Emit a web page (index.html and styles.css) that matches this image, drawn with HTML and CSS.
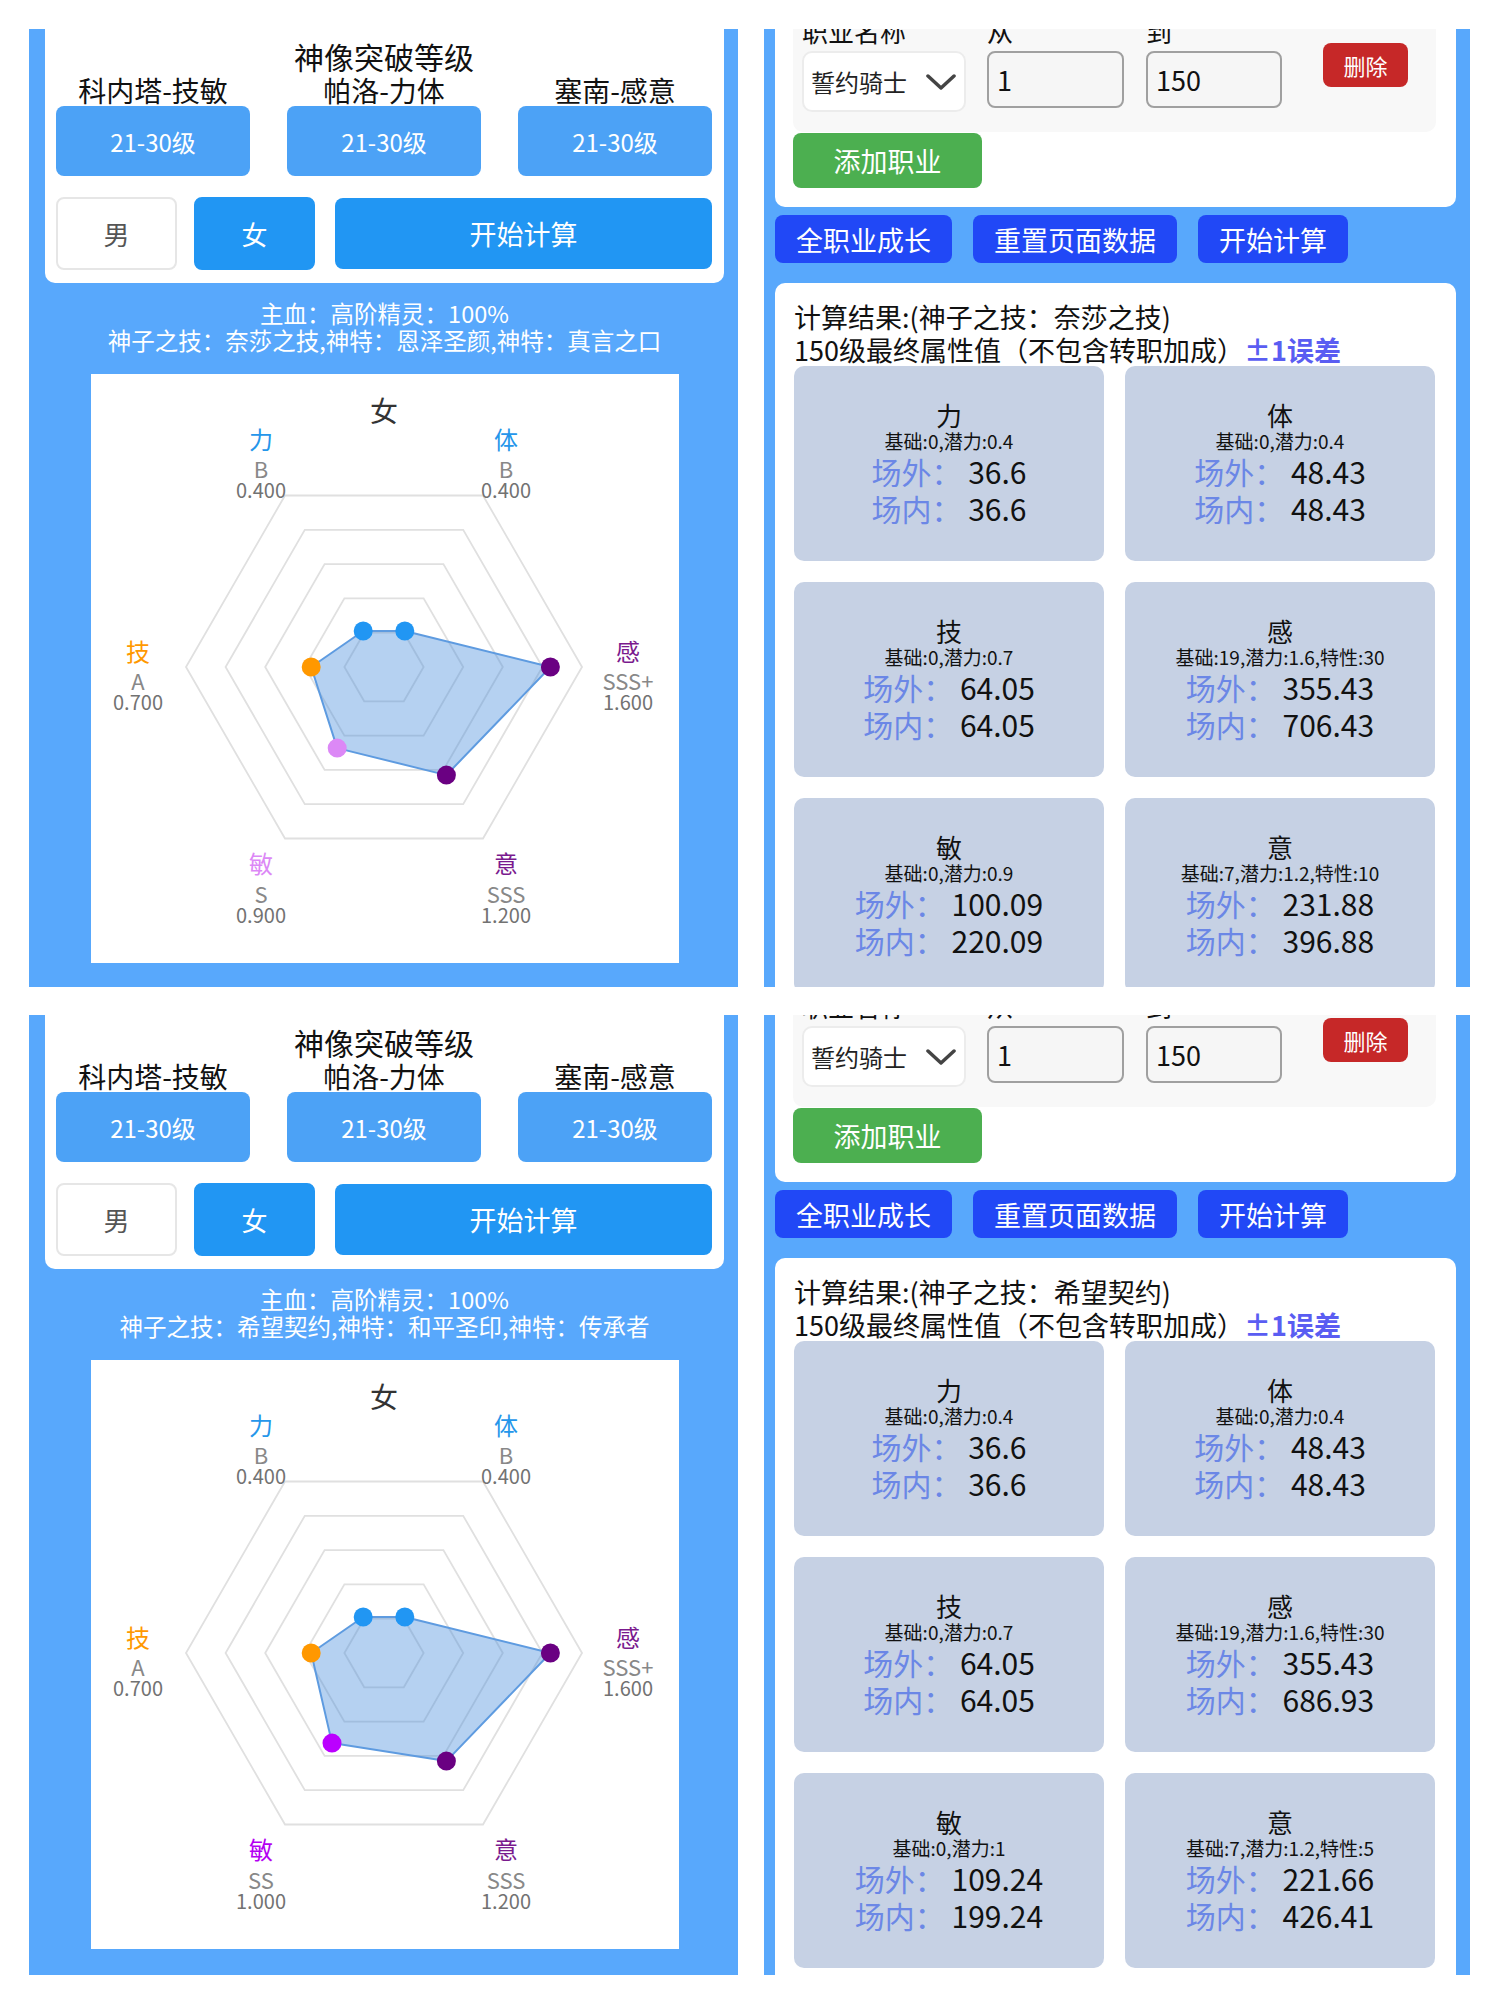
FILE: index.html
```html
<!DOCTYPE html>
<html lang="zh-CN">
<head>
<meta charset="utf-8">
<title>神像突破计算</title>
<link rel="stylesheet" href="styles.css">
</head>
<body>
<div class="page">

  <!-- top left -->
  <section class="panel panel-left">
    <div class="setup-card">
      <div class="setup-title">神像突破等级</div>
      <div class="level-row">
        <div class="level-col"><div class="level-name">科内塔-技敏</div><button class="level-btn">21-30级</button></div>
        <div class="level-col"><div class="level-name">帕洛-力体</div><button class="level-btn">21-30级</button></div>
        <div class="level-col"><div class="level-name">塞南-感意</div><button class="level-btn">21-30级</button></div>
      </div>
      <div class="gender-row">
        <button class="gender-btn">男</button>
        <button class="gender-btn is-active">女</button>
        <button class="calc-btn">开始计算</button>
      </div>
    </div>
    <div class="info">
      <div>主血：高阶精灵：100%</div>
      <div>神子之技：奈莎之技,神特：恩泽圣颜,神特：真言之口</div>
    </div>
    <div class="chart-box">
      <svg class="radar" viewBox="0 0 588 589" width="588" height="589">
        <g transform="translate(-3,0)">
          <g class="rings">
            <polygon points="494,293 395,121.5 197,121.5 98,293 197,464.5 395,464.5"/>
            <polygon points="454.4,293 375.2,155.8 216.8,155.8 137.6,293 216.8,430.2 375.2,430.2"/>
            <polygon points="414.8,293 355.4,190.1 236.6,190.1 177.2,293 236.6,395.9 355.4,395.9"/>
            <polygon points="375.2,293 335.6,224.4 256.4,224.4 216.8,293 256.4,361.6 335.6,361.6"/>
            <polygon points="335.6,293 315.8,258.7 276.2,258.7 256.4,293 276.2,327.3 315.8,327.3"/>
          </g>
          <polygon class="area" points="275.2,257 316.8,257 462.4,293 358.4,401.1 249.2,374.1 223.2,293"/>
          <circle class="dot c-blue" cx="275.2" cy="257" r="9.5"/>
          <circle class="dot c-blue" cx="316.8" cy="257" r="9.5"/>
          <circle class="dot c-purple" cx="462.4" cy="293" r="9.5"/>
          <circle class="dot c-purple" cx="358.4" cy="401.1" r="9.5"/>
          <circle class="dot c-violet" cx="249.2" cy="374.1" r="9.5"/>
          <circle class="dot c-orange" cx="223.2" cy="293" r="9.5"/>
        </g>
        <g transform="translate(-1,2.5)">
          <text class="r-title" x="294" y="45">女</text>

          <text class="r-name t-blue" x="171" y="72">力</text>
          <text class="r-grade" x="171" y="101.5">B</text>
          <text class="r-val" x="171" y="121.5">0.400</text>

          <text class="r-name t-blue" x="416" y="72">体</text>
          <text class="r-grade" x="416" y="101.5">B</text>
          <text class="r-val" x="416" y="121.5">0.400</text>

          <text class="r-name t-orange" x="48" y="284.5">技</text>
          <text class="r-grade" x="48" y="313">A</text>
          <text class="r-val" x="48" y="333.5">0.700</text>

          <text class="r-name t-purple" x="538" y="284.5">感</text>
          <text class="r-grade" x="538" y="313">SSS+</text>
          <text class="r-val" x="538" y="333.5">1.600</text>

          <text class="r-name t-violet" x="171" y="496.5">敏</text>
          <text class="r-grade" x="171" y="526">S</text>
          <text class="r-val" x="171" y="546">0.900</text>

          <text class="r-name t-purple" x="416" y="496.5">意</text>
          <text class="r-grade" x="416" y="526">SSS</text>
          <text class="r-val" x="416" y="546">1.200</text>
        </g>
      </svg>
    </div>
  </section>

  <!-- top right -->
  <section class="panel panel-right">
    <div class="job-card">
      <div class="job-box">
        <div class="job-row">
          <div class="field field-select">
            <div class="field-label">职业名称</div>
            <div class="select">
              <span>誓约骑士</span>
              <svg class="chevron" viewBox="0 0 30 16" width="30" height="16"><polyline points="2,2 15,14 28,2"/></svg>
            </div>
          </div>
          <div class="field field-from">
            <div class="field-label">从</div>
            <div class="num-input">1</div>
          </div>
          <div class="field field-to">
            <div class="field-label">到</div>
            <div class="num-input">150</div>
          </div>
          <button class="del-btn">删除</button>
        </div>
      </div>
      <button class="add-btn">添加职业</button>
    </div>
    <div class="action-row">
      <button class="action-btn">全职业成长</button>
      <button class="action-btn">重置页面数据</button>
      <button class="action-btn">开始计算</button>
    </div>
    <div class="result-card">
      <div class="result-head">计算结果:(神子之技：奈莎之技)</div>
      <div class="result-head">150级最终属性值（不包含转职加成）<span class="err">±1误差</span></div>
      <div class="stats">
        <div class="stat">
          <div class="stat-name">力</div>
          <div class="stat-base">基础:0,潜力:0.4</div>
          <div class="stat-line"><span class="stat-key">场外：</span> 36.6</div>
          <div class="stat-line"><span class="stat-key">场内：</span> 36.6</div>
        </div>
        <div class="stat">
          <div class="stat-name">体</div>
          <div class="stat-base">基础:0,潜力:0.4</div>
          <div class="stat-line"><span class="stat-key">场外：</span> 48.43</div>
          <div class="stat-line"><span class="stat-key">场内：</span> 48.43</div>
        </div>
        <div class="stat">
          <div class="stat-name">技</div>
          <div class="stat-base">基础:0,潜力:0.7</div>
          <div class="stat-line"><span class="stat-key">场外：</span> 64.05</div>
          <div class="stat-line"><span class="stat-key">场内：</span> 64.05</div>
        </div>
        <div class="stat">
          <div class="stat-name">感</div>
          <div class="stat-base">基础:19,潜力:1.6,特性:30</div>
          <div class="stat-line"><span class="stat-key">场外：</span> 355.43</div>
          <div class="stat-line"><span class="stat-key">场内：</span> 706.43</div>
        </div>
        <div class="stat">
          <div class="stat-name">敏</div>
          <div class="stat-base">基础:0,潜力:0.9</div>
          <div class="stat-line"><span class="stat-key">场外：</span> 100.09</div>
          <div class="stat-line"><span class="stat-key">场内：</span> 220.09</div>
        </div>
        <div class="stat">
          <div class="stat-name">意</div>
          <div class="stat-base">基础:7,潜力:1.2,特性:10</div>
          <div class="stat-line"><span class="stat-key">场外：</span> 231.88</div>
          <div class="stat-line"><span class="stat-key">场内：</span> 396.88</div>
        </div>
      </div>
    </div>
  </section>

  <!-- bottom left -->
  <section class="panel panel-left">
    <div class="setup-card">
      <div class="setup-title">神像突破等级</div>
      <div class="level-row">
        <div class="level-col"><div class="level-name">科内塔-技敏</div><button class="level-btn">21-30级</button></div>
        <div class="level-col"><div class="level-name">帕洛-力体</div><button class="level-btn">21-30级</button></div>
        <div class="level-col"><div class="level-name">塞南-感意</div><button class="level-btn">21-30级</button></div>
      </div>
      <div class="gender-row">
        <button class="gender-btn">男</button>
        <button class="gender-btn is-active">女</button>
        <button class="calc-btn">开始计算</button>
      </div>
    </div>
    <div class="info">
      <div>主血：高阶精灵：100%</div>
      <div>神子之技：希望契约,神特：和平圣印,神特：传承者</div>
    </div>
    <div class="chart-box">
      <svg class="radar" viewBox="0 0 588 589" width="588" height="589">
        <g transform="translate(-3,0)">
          <g class="rings">
            <polygon points="494,293 395,121.5 197,121.5 98,293 197,464.5 395,464.5"/>
            <polygon points="454.4,293 375.2,155.8 216.8,155.8 137.6,293 216.8,430.2 375.2,430.2"/>
            <polygon points="414.8,293 355.4,190.1 236.6,190.1 177.2,293 236.6,395.9 355.4,395.9"/>
            <polygon points="375.2,293 335.6,224.4 256.4,224.4 216.8,293 256.4,361.6 335.6,361.6"/>
            <polygon points="335.6,293 315.8,258.7 276.2,258.7 256.4,293 276.2,327.3 315.8,327.3"/>
          </g>
          <polygon class="area" points="275.2,257 316.8,257 462.4,293 358.4,401.1 244,383.1 223.2,293"/>
          <circle class="dot c-blue" cx="275.2" cy="257" r="9.5"/>
          <circle class="dot c-blue" cx="316.8" cy="257" r="9.5"/>
          <circle class="dot c-purple" cx="462.4" cy="293" r="9.5"/>
          <circle class="dot c-purple" cx="358.4" cy="401.1" r="9.5"/>
          <circle class="dot c-magenta" cx="244" cy="383.1" r="9.5"/>
          <circle class="dot c-orange" cx="223.2" cy="293" r="9.5"/>
        </g>
        <g transform="translate(-1,2.5)">
          <text class="r-title" x="294" y="45">女</text>

          <text class="r-name t-blue" x="171" y="72">力</text>
          <text class="r-grade" x="171" y="101.5">B</text>
          <text class="r-val" x="171" y="121.5">0.400</text>

          <text class="r-name t-blue" x="416" y="72">体</text>
          <text class="r-grade" x="416" y="101.5">B</text>
          <text class="r-val" x="416" y="121.5">0.400</text>

          <text class="r-name t-orange" x="48" y="284.5">技</text>
          <text class="r-grade" x="48" y="313">A</text>
          <text class="r-val" x="48" y="333.5">0.700</text>

          <text class="r-name t-purple" x="538" y="284.5">感</text>
          <text class="r-grade" x="538" y="313">SSS+</text>
          <text class="r-val" x="538" y="333.5">1.600</text>

          <text class="r-name t-magenta" x="171" y="496.5">敏</text>
          <text class="r-grade" x="171" y="526">SS</text>
          <text class="r-val" x="171" y="546">1.000</text>

          <text class="r-name t-purple" x="416" y="496.5">意</text>
          <text class="r-grade" x="416" y="526">SSS</text>
          <text class="r-val" x="416" y="546">1.200</text>
        </g>
      </svg>
    </div>
  </section>

  <!-- bottom right -->
  <section class="panel panel-right panel-right-low">
    <div class="job-card">
      <div class="job-box">
        <div class="job-row">
          <div class="field field-select">
            <div class="field-label">职业名称</div>
            <div class="select">
              <span>誓约骑士</span>
              <svg class="chevron" viewBox="0 0 30 16" width="30" height="16"><polyline points="2,2 15,14 28,2"/></svg>
            </div>
          </div>
          <div class="field field-from">
            <div class="field-label">从</div>
            <div class="num-input">1</div>
          </div>
          <div class="field field-to">
            <div class="field-label">到</div>
            <div class="num-input">150</div>
          </div>
          <button class="del-btn">删除</button>
        </div>
      </div>
      <button class="add-btn">添加职业</button>
    </div>
    <div class="action-row">
      <button class="action-btn">全职业成长</button>
      <button class="action-btn">重置页面数据</button>
      <button class="action-btn">开始计算</button>
    </div>
    <div class="result-card">
      <div class="result-head">计算结果:(神子之技：希望契约)</div>
      <div class="result-head">150级最终属性值（不包含转职加成）<span class="err">±1误差</span></div>
      <div class="stats">
        <div class="stat">
          <div class="stat-name">力</div>
          <div class="stat-base">基础:0,潜力:0.4</div>
          <div class="stat-line"><span class="stat-key">场外：</span> 36.6</div>
          <div class="stat-line"><span class="stat-key">场内：</span> 36.6</div>
        </div>
        <div class="stat">
          <div class="stat-name">体</div>
          <div class="stat-base">基础:0,潜力:0.4</div>
          <div class="stat-line"><span class="stat-key">场外：</span> 48.43</div>
          <div class="stat-line"><span class="stat-key">场内：</span> 48.43</div>
        </div>
        <div class="stat">
          <div class="stat-name">技</div>
          <div class="stat-base">基础:0,潜力:0.7</div>
          <div class="stat-line"><span class="stat-key">场外：</span> 64.05</div>
          <div class="stat-line"><span class="stat-key">场内：</span> 64.05</div>
        </div>
        <div class="stat">
          <div class="stat-name">感</div>
          <div class="stat-base">基础:19,潜力:1.6,特性:30</div>
          <div class="stat-line"><span class="stat-key">场外：</span> 355.43</div>
          <div class="stat-line"><span class="stat-key">场内：</span> 686.93</div>
        </div>
        <div class="stat">
          <div class="stat-name">敏</div>
          <div class="stat-base">基础:0,潜力:1</div>
          <div class="stat-line"><span class="stat-key">场外：</span> 109.24</div>
          <div class="stat-line"><span class="stat-key">场内：</span> 199.24</div>
        </div>
        <div class="stat">
          <div class="stat-name">意</div>
          <div class="stat-base">基础:7,潜力:1.2,特性:5</div>
          <div class="stat-line"><span class="stat-key">场外：</span> 221.66</div>
          <div class="stat-line"><span class="stat-key">场内：</span> 426.41</div>
        </div>
      </div>
    </div>
  </section>

</div>
</body>
</html>
```

FILE: styles.css
```css
* { box-sizing: border-box; }

html, body {
  margin: 0;
  background: #ffffff;
}

body {
  font-family: "Noto Sans CJK SC", "Noto Sans", sans-serif;
  color: #111111;
}

button {
  font-family: inherit;
  border: none;
  margin: 0;
  padding: 0;
  cursor: pointer;
}

.page {
  display: grid;
  grid-template-columns: 709px 706px;
  grid-template-rows: 958px 960px;
  column-gap: 26px;
  row-gap: 28px;
  padding: 29px 0 0 29px;
}

.panel {
  background: #58a8fc;
  overflow: hidden;
}

/* ---------- left panel ---------- */
.panel-left {
  padding: 0 14px 0 16px;
}

.setup-card {
  background: #ffffff;
  border-radius: 0 0 10px 10px;
  padding: 9px 12px 13px 11px;
}

.setup-title {
  font-size: 30px;
  line-height: 36px;
  text-align: center;
  color: #111;
}

.level-row {
  display: grid;
  grid-template-columns: repeat(3, 1fr);
  column-gap: 37px;
}

.level-name {
  font-size: 28px;
  line-height: 32px;
  text-align: center;
  color: #111;
}

.level-btn {
  display: block;
  width: 100%;
  height: 70px;
  background: #4ca2f6;
  color: #ffffff;
  font-size: 24px;
  border-radius: 8px;
}

.gender-row {
  display: flex;
  align-items: center;
  margin-top: 21px;
  height: 73px;
}

.gender-btn {
  width: 121px;
  height: 73px;
  background: #ffffff;
  border: 2px solid #e6e6e6;
  border-radius: 8px;
  color: #555555;
  font-size: 26px;
  margin-right: 17px;
}

.gender-btn.is-active {
  background: #2196f3;
  border-color: #2196f3;
  color: #ffffff;
  margin-right: 20px;
}

.calc-btn {
  flex: 1;
  height: 71px;
  background: #2196f3;
  color: #ffffff;
  font-size: 27px;
  border-radius: 8px;
}

.info {
  margin-top: 17px;
  text-align: center;
  color: #ffffff;
  font-size: 23.5px;
  line-height: 27px;
}

.chart-box {
  width: 588px;
  height: 589px;
  margin: 20px auto 0;
  background: #ffffff;
}

.radar {
  display: block;
}

.rings polygon {
  fill: none;
  stroke: #e0e0e0;
  stroke-width: 1.8;
}

.area {
  fill: rgba(70, 140, 220, 0.4);
  stroke: #5e9be0;
  stroke-width: 2;
  stroke-linejoin: round;
}

.dot { stroke: none; }
.c-blue { fill: #2196f3; }
.c-purple { fill: #6a0082; }
.c-violet { fill: #dc88f6; }
.c-magenta { fill: #bb00ff; }
.c-orange { fill: #ff9800; }

.radar text {
  font-family: "Noto Sans CJK SC", "Noto Sans", sans-serif;
  text-anchor: middle;
}

.r-title { font-size: 28px; fill: #333333; }
.r-name { font-size: 24px; }
.r-grade { font-size: 22px; fill: #888888; }
.r-val { font-size: 20px; fill: #727272; }

.t-blue { fill: #2596ea; }
.t-orange { fill: #ff9800; }
.t-purple { fill: #7a1a8e; }
.t-violet { fill: #dc88f6; }
.t-magenta { fill: #b400f2; }

/* ---------- right panel ---------- */
.panel-right {
  padding: 0 14px 0 11px;
}

.job-card {
  background: #ffffff;
  border-radius: 0 0 10px 10px;
  margin-top: -30px;
  padding: 0 20px 19px 18px;
}

.panel-right-low .job-card {
  margin-top: -41px;
}

.job-box {
  background: #f8f8f8;
  border-radius: 10px;
  padding: 17px 9px 20px;
}

.job-row {
  display: flex;
  align-items: flex-start;
}

.field-label {
  font-size: 26px;
  line-height: 30px;
  margin-bottom: 5px;
  color: #111;
}

.field-select { width: 164px; margin-right: 21px; }
.field-from { width: 137px; margin-right: 22px; }
.field-to { width: 136px; margin-right: 41px; }

.select {
  height: 61px;
  background: #ffffff;
  border: 2px solid #ececec;
  border-radius: 10px;
  display: flex;
  align-items: center;
  justify-content: space-between;
  padding: 0 8px 0 7px;
  font-size: 24px;
  color: #222;
}

.chevron polyline {
  fill: none;
  stroke: #444444;
  stroke-width: 3.5;
  stroke-linecap: round;
  stroke-linejoin: round;
}

.num-input {
  height: 57px;
  background: #f6f6f6;
  border: 2px solid #a0a0a0;
  border-radius: 8px;
  padding-left: 8px;
  font-size: 27px;
  line-height: 53px;
  color: #111;
}

.del-btn {
  margin-top: 27px;
  width: 85px;
  height: 44px;
  background: #c62828;
  color: #ffffff;
  font-size: 22px;
  border-radius: 8px;
}

.add-btn {
  display: block;
  margin-top: 1px;
  width: 189px;
  height: 55px;
  background: #4caf50;
  color: #ffffff;
  font-size: 27px;
  border-radius: 8px;
}

.action-row {
  display: flex;
  gap: 21px;
  margin-top: 8px;
}

.action-btn {
  height: 48px;
  padding: 0 21px;
  background: #2148f6;
  color: #ffffff;
  font-size: 27px;
  border-radius: 8px;
}

.result-card {
  margin-top: 20px;
  background: #ffffff;
  border-radius: 10px;
  padding: 17px 21px 20px 19px;
}

.result-head {
  font-size: 27px;
  line-height: 33px;
  color: #111;
  white-space: nowrap;
}

.err {
  color: #5a5df2;
  font-weight: 700;
}

.stats {
  display: grid;
  grid-template-columns: 310px 310px;
  grid-auto-rows: 195px;
  gap: 21px;
}

.stat {
  background: #c6d1e4;
  border-radius: 10px;
  display: flex;
  flex-direction: column;
  justify-content: center;
  align-items: center;
  color: #111;
}

.stat-name {
  font-size: 26px;
  line-height: 28px;
}

.stat-base {
  font-size: 19px;
  line-height: 24px;
}

.stat-line {
  font-size: 30px;
  line-height: 37px;
  white-space: nowrap;
}

.stat-key {
  color: #6b87e6;
}
```
